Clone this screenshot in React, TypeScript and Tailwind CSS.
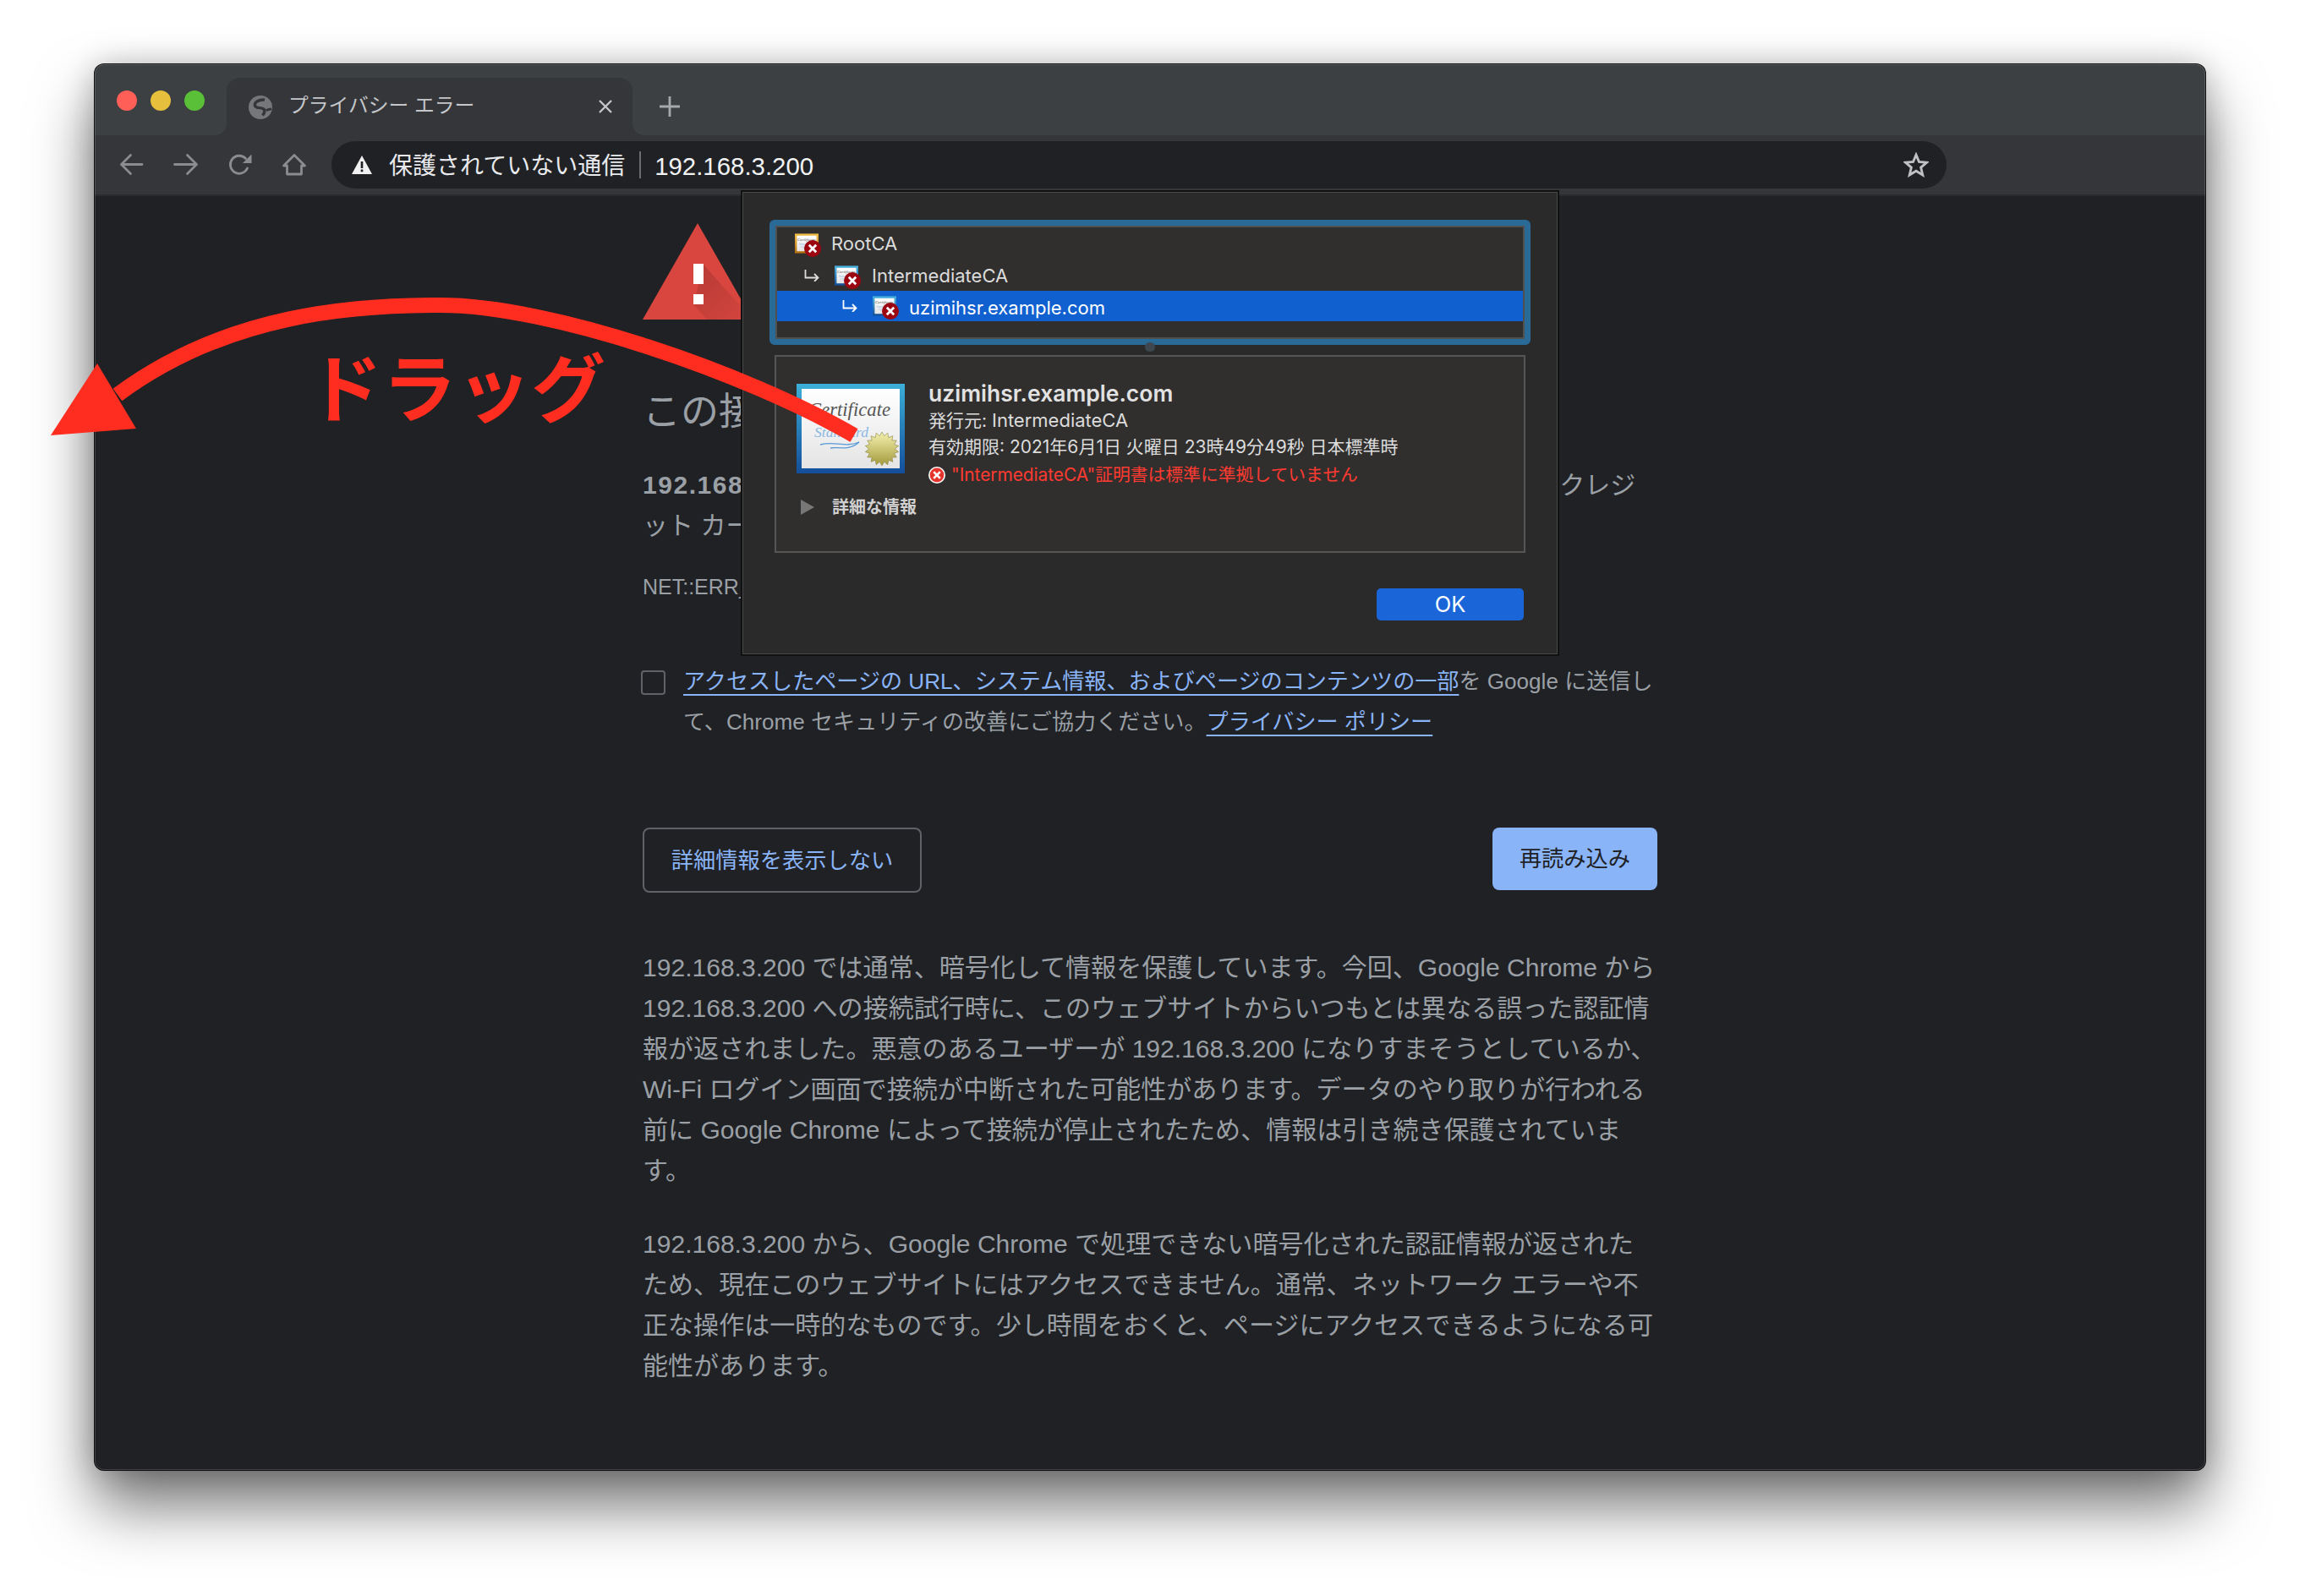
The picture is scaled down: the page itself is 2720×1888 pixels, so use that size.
import React from "react";

const pageFont = "[font-family:'Liberation_Sans','Noto_Sans_CJK_JP',sans-serif]";
const dialogFont = "[font-family:Inter,'Noto_Sans_CJK_JP',sans-serif]";

function sealPoints(cx: number, cy: number, outer: number, inner: number, spikes: number) {
    const pts: string[] = [];
    for (let i = 0; i < spikes * 2; i++) {
        const r = i % 2 === 0 ? outer : inner;
        const a = (Math.PI * i) / spikes;
        pts.push(`${(cx + r * Math.sin(a)).toFixed(1)},${(cy - r * Math.cos(a)).toFixed(1)}`);
    }
    return pts.join(" ");
}

function CertArt({ id, top, bottom, inset = 6 }: { id: string; top: string; bottom: string; inset?: number }) {
    return (
        <svg viewBox="0 0 128 106" className="w-full h-full block">
            <defs>
                <linearGradient id={`${id}-frame`} x1="0" y1="0" x2="0" y2="1">
                    <stop offset="0" stopColor={top} />
                    <stop offset="1" stopColor={bottom} />
                </linearGradient>
                <linearGradient id={`${id}-paper`} x1="0" y1="0" x2="0" y2="1">
                    <stop offset="0" stopColor="#ffffff" />
                    <stop offset="1" stopColor="#e4e4e4" />
                </linearGradient>
                <linearGradient id={`${id}-seal`} x1="0" y1="0" x2="0" y2="1">
                    <stop offset="0" stopColor="#f5f2b0" />
                    <stop offset="1" stopColor="#a39a3c" />
                </linearGradient>
            </defs>
            <rect width="128" height="106" fill={`url(#${id}-frame)`} />
            <rect x={inset} y={inset} width={128 - inset * 2} height={106 - inset * 2} fill={`url(#${id}-paper)`} />
            <text x="14" y="38" fontSize="23" fontStyle="italic" fontFamily="'Liberation Serif', serif" fill="#555555" textLength="97" lengthAdjust="spacingAndGlyphs">
                Certificate
            </text>
            <text x="21" y="63" fontSize="17" fontStyle="italic" fontFamily="'Liberation Serif', serif" fill="#8ab8e4" textLength="64" lengthAdjust="spacingAndGlyphs">
                Standard
            </text>
            <path d="M28 72 C46 67 56 76 74 69 C62 80 48 74 40 76" fill="none" stroke="#5a9ad8" strokeWidth="1.3" />
            <polygon points={sealPoints(101, 77, 20, 15.5, 18)} fill={`url(#${id}-seal)`} stroke="#8a8340" strokeWidth="0.6" />
        </svg>
    );
}

function SmallCert({ id, top, bottom }: { id: string; top: string; bottom: string }) {
    return (
        <div className="relative w-[28px] h-[24px] shrink-0">
            <CertArt id={id} top={top} bottom={bottom} inset={11} />
            <svg viewBox="0 0 20 20" className="absolute right-[-3px] bottom-[-4px] w-[20px] h-[20px]">
                <circle cx="10" cy="10" r="10" fill="#9c0610" />
                <path d="M5.8 5.8 14.2 14.2M14.2 5.8 5.8 14.2" stroke="#fff" strokeWidth="2.8" />
            </svg>
        </div>
    );
}

function TreeArrow() {
    return (
        <svg viewBox="0 0 18 14" className="w-[18px] h-[14px] shrink-0 mr-[18px]" fill="none" stroke="currentColor" strokeWidth="1.8">
            <path d="M1.5 0V9.5H16M12 5l4.5 4.5L12 14" />
        </svg>
    );
}

function NavIcon({ children }: { children: React.ReactNode }) {
    return (
        <svg viewBox="0 0 32 32" className="w-[32px] h-[32px] shrink-0" fill="none" stroke="#8a8c8f" strokeWidth="2.8" strokeLinecap="round" strokeLinejoin="round">
            {children}
        </svg>
    );
}

export default function App() {
    return (
        <div className={`relative w-[2720px] h-[1888px] bg-white overflow-hidden pt-[76px] pl-[112px] ${pageFont}`}>
            {/* browser window */}
            <div className="relative w-[2496px] h-[1663px] rounded-[11px] bg-[#202124] flex flex-col shadow-[0_0_0_1px_#111,0_42px_72px_rgba(0,0,0,0.55),0_0_36px_rgba(0,0,0,0.22)]">
                <div className="h-[84px] shrink-0 flex items-start bg-[#3c4043] rounded-t-[11px] pl-[26px]">
                    <div className="flex gap-[16px] mt-[31px] mr-[26px]">
                        <div className="w-[24px] h-[24px] rounded-full bg-[#ff5f57]" />
                        <div className="w-[24px] h-[24px] rounded-full bg-[#e6bf3c]" />
                        <div className="w-[24px] h-[24px] rounded-full bg-[#5ac038]" />
                    </div>
                    {/* tab */}
                    <div className="relative mt-[16px] w-[480px] h-[68px] bg-[#35363a] rounded-t-[16px] flex items-center pl-[26px] pr-[24px]">
                        <div className="absolute left-[-14px] bottom-0 w-[14px] h-[14px] bg-[#35363a]">
                            <div className="w-full h-full bg-[#3c4043] rounded-br-[14px]" />
                        </div>
                        <div className="absolute right-[-14px] bottom-0 w-[14px] h-[14px] bg-[#35363a]">
                            <div className="w-full h-full bg-[#3c4043] rounded-bl-[14px]" />
                        </div>
                        <svg viewBox="0 0 28 28" className="w-[28px] h-[28px] shrink-0 mt-[2px]" fill="none">
                            <circle cx="14" cy="14" r="14" fill="#75777a" />
                            <path d="M19 5C12 4.5 6.5 8 7.5 12C8.5 15.5 14 14 17 15.5C20 17 19 20.5 16.5 23.5" stroke="#35363a" strokeWidth="3.4" />
                            <path d="M27 15.5C24.5 17 22.5 16 21 18" stroke="#35363a" strokeWidth="3" />
                        </svg>
                        <span className="ml-[19px] -mt-[2px] text-[23.8px] text-[#c4c6c9] whitespace-nowrap">プライバシー エラー</span>
                        <svg viewBox="0 0 16 16" className="ml-auto w-[16px] h-[16px] shrink-0" stroke="#c4c6c9" strokeWidth="2.4">
                            <path d="M1 1 15 15M15 1 1 15" />
                        </svg>
                    </div>
                    <svg viewBox="0 0 24 24" className="ml-[32px] mt-[38px] w-[24px] h-[24px] shrink-0" stroke="#a6a8ab" strokeWidth="2.8">
                        <path d="M12 0V24M0 12H24" />
                    </svg>
                </div>

                {/* toolbar */}
                <div className="relative h-[72px] shrink-0 flex items-center bg-[#35363a] border-b-2 border-[#2a2b2d] pl-[27px] box-border">
                    <div className="flex gap-[32px]">
                        <NavIcon><path d="M29 15.5H5.5M15.5 4.5 4.5 15.5 15.5 26.5" /></NavIcon>
                        <NavIcon><path d="M3.5 15.5H28M18.5 4.5 29.5 15.5 18.5 26.5" /></NavIcon>
                        <NavIcon>
                            <path d="M23.5 8.5A10.5 10.5 0 1 0 25.5 20" />
                            <path d="M30.5 3.5V14H20Z" fill="#8a8c8f" stroke="none" />
                        </NavIcon>
                        <NavIcon><path d="M17 4.5 4.5 17H8.5V27H25.5V17H29.5Z" /></NavIcon>
                    </div>
                    <div className="ml-[29px] w-[1910px] h-[56px] rounded-full bg-[#202124] flex items-center pl-[24px] pr-[21px]">
                        <svg viewBox="0 0 24 22" className="w-[24px] h-[22px] shrink-0">
                            <path d="M12 0 24 22H0Z" fill="#f1f1f1" />
                            <path d="M10.7 7h2.6v8h-2.6zM10.7 16.5h2.6v2.7h-2.6z" fill="#202124" />
                        </svg>
                        <span className="ml-[20px] mt-[4px] text-[28px] text-[#e8eaed] whitespace-nowrap">保護されていない通信</span>
                        <div className="ml-[17px] w-[2px] h-[32px] bg-[#6a6c70]" />
                        <span className="ml-[16px] mt-[4px] text-[29.4px] text-[#f1f3f4]">192.168.3.200</span>
                        <svg viewBox="0 0 24 24" className="ml-auto w-[30px] h-[30px] shrink-0" fill="none" stroke="#c0c1c3" strokeWidth="2.3">
                            <path d="M12 2.5 14.8 9.2 22 9.8 16.5 14.5 18.2 21.6 12 17.8 5.8 21.6 7.5 14.5 2 9.8 9.2 9.2Z" />
                        </svg>
                    </div>
                </div>

                {/* interstitial page */}
                <div className="flex-1 pl-[648px] pt-[32px]">
                    <div className="w-[1200px] text-[30.05px] leading-[48px] text-[#9aa0a6]">
                        <svg viewBox="0 0 130 114" className="w-[130px] h-[114px] block">
                            <defs>
                                <linearGradient id="warn-shade" x1="0" y1="0" x2="1" y2="1">
                                    <stop offset="0" stopColor="#000" stopOpacity="0.16" />
                                    <stop offset="1" stopColor="#000" stopOpacity="0.02" />
                                </linearGradient>
                            </defs>
                            <path d="M65 0 130 114H0Z" fill="#d9463f" />
                            <path d="M72 49 130 114H76L60 96Z" fill="url(#warn-shade)" />
                            <rect x="60" y="48" width="12" height="24" fill="#fff" />
                            <rect x="60" y="84" width="12" height="12" fill="#fff" />
                        </svg>
                        <h1 className="mt-[80px] text-[45px] leading-[60px] font-normal whitespace-nowrap">
                            この接続ではプライバシーが保護されません
                        </h1>
                        <p className="mt-[32px]">
                            <b className="font-bold tracking-[1.5px]">192.168.3.200</b> では、悪意のあるユーザーによって、パスワード、メッセージ、クレジット カードなどの情報が不正に取得される可能性があります。
                        </p>
                        <p className="mt-[24px] text-[25px]">NET::ERR_CERT_AUTHORITY_INVALID</p>

                        <div className="mt-[65px] flex text-[26.1px]">
                            <div className="w-[29px] h-[29px] mt-[10px] ml-[-2px] mr-[21px] shrink-0 rounded-[4px] border-2 border-[#5f6368]" />
                            <p className="w-[1155px] -mt-[1px]">
                                <span className="text-[#8ab4f8] underline underline-offset-[6px] decoration-2">アクセスしたページの URL、システム情報、およびページのコンテンツの一部</span>
                                を Google に送信して、Chrome セキュリティの改善にご協力ください。
                                <span className="text-[#8ab4f8] underline underline-offset-[6px] decoration-2">プライバシー ポリシー</span>
                            </p>
                        </div>

                        <div className="mt-[101px] flex justify-between items-start text-[26.25px]">
                            <div className="w-[330px] h-[77px] rounded-[8px] border-2 border-[#5f6368] text-[#8ab4f8] flex items-center justify-center">
                                詳細情報を表示しない
                            </div>
                            <div className="w-[195px] h-[74px] rounded-[8px] bg-[#8ab4f8] text-[#202124] flex items-center justify-center">
                                再読み込み
                            </div>
                        </div>

                        <p className="mt-[65px]">
                            192.168.3.200 では通常、暗号化して情報を保護しています。今回、Google Chrome から 192.168.3.200 への接続試行時に、このウェブサイトからいつもとは異なる誤った認証情報が返されました。悪意のあるユーザーが 192.168.3.200 になりすまそうとしているか、Wi-Fi ログイン画面で接続が中断された可能性があります。データのやり取りが行われる前に Google Chrome によって接続が停止されたため、情報は引き続き保護されています。
                        </p>
                        <p className="mt-[39px]">
                            192.168.3.200 から、Google Chrome で処理できない暗号化された認証情報が返されたため、現在このウェブサイトにはアクセスできません。通常、ネットワーク エラーや不正な操作は一時的なものです。少し時間をおくと、ページにアクセスできるようになる可能性があります。
                        </p>
                    </div>
                </div>

                {/* certificate sheet */}
                <div className={`absolute left-[764px] top-[149px] w-[968px] h-[551px] bg-[#2a2a2a] border-2 border-[#111] shadow-[inset_0_0_0_1px_#484848] text-[#dcdcdc] ${dialogFont}`}>
                    <div className="ml-[32px] mt-[33px] w-[900px] h-[148px] rounded-[6px] border-[7px] border-[#2a6a97] box-border">
                        <div className="h-full border-2 border-[#505050] bg-[#302f2e] text-[22px]">
                            <div className="h-[38px] flex items-center pl-[21px]">
                                <SmallCert id="root" top="#f3c04a" bottom="#b56d10" />
                                <span className="ml-[15px]">RootCA</span>
                            </div>
                            <div className="h-[37px] flex items-center pl-[32px]">
                                <TreeArrow />
                                <SmallCert id="inter" top="#4ab4dc" bottom="#134e9a" />
                                <span className="ml-[16px] mt-[2px]">IntermediateCA</span>
                            </div>
                            <div className="h-[36px] flex items-center pl-[77px] bg-[#1160d0] text-white">
                                <TreeArrow />
                                <SmallCert id="leaf" top="#4ab4dc" bottom="#134e9a" />
                                <span className="ml-[15px] mt-[5px]">uzimihsr.example.com</span>
                            </div>
                        </div>
                    </div>
                    <div className="h-[12px] flex justify-center">
                        <div className="w-[12px] h-[11px] -mt-[3px] rounded-full bg-[#3e474d]" />
                    </div>
                    <div className="ml-[38px] w-[888px] h-[234px] border-2 border-[#555] bg-[#302f2e] box-border pl-[24px] pt-[32px]">
                        <div className="flex items-start">
                            <div className="w-[128px] h-[106px] shrink-0">
                                <CertArt id="main" top="#3cb0d8" bottom="#134e9a" />
                            </div>
                            <div className="ml-[28px] -mt-[6px] text-[21px] leading-[32px] whitespace-nowrap">
                                <div className="text-[26.5px] leading-[34px] font-semibold text-[#e2e2e2]">uzimihsr.example.com</div>
                                <div className="leading-[31px]">発行元: <span className="text-[22px]">IntermediateCA</span></div>
                                <div>有効期限: 2021年6月1日 火曜日 23時49分49秒 日本標準時</div>
                                <div className="flex items-center text-[#ff3a30] text-[20.8px] mt-[1px]">
                                    <svg viewBox="0 0 20 20" className="w-[20px] h-[20px] mr-[7px] shrink-0">
                                        <circle cx="10" cy="10" r="10" fill="#fff" />
                                        <circle cx="10" cy="10" r="8.4" fill="#e5342c" />
                                        <path d="M6.2 6.2 13.8 13.8M13.8 6.2 6.2 13.8" stroke="#fff" strokeWidth="2.6" />
                                    </svg>
                                    "IntermediateCA"証明書は標準に準拠していません
                                </div>
                            </div>
                        </div>
                        <div className="mt-[11px] h-[22px] flex items-center ml-[5px] text-[20px] font-bold text-[#d0d0d0]">
                            <div className="w-0 h-0 border-y-[9px] border-y-transparent border-l-[16px] border-l-[#777]" />
                            <span className="ml-[21px]">詳細な情報</span>
                        </div>
                    </div>
                    <div className="mt-[42px] flex justify-end pr-[40px]">
                        <div className="w-[174px] h-[38px] rounded-[5px] bg-[#1a66d8] text-white text-[25.5px] flex items-center justify-center">OK</div>
                    </div>
                </div>

                <div className="absolute inset-0 rounded-[11px] border border-white/15 pointer-events-none" />
            </div>

            {/* annotation over the screenshot */}
            <svg viewBox="0 0 2720 1888" className="absolute inset-0 w-[2720px] h-[1888px] pointer-events-none">
                <path d="M1010 515C880 440 650 361 521 361C420 361 270 370 139 467" fill="none" stroke="#ff2d1f" strokeWidth="18" />
                <path d="M60 515 115 430 161 507Z" fill="#ff2d1f" />
            </svg>
            <div className="absolute left-[364px] top-[412px] text-[88px] leading-[100px] font-bold text-[#ff2d1f] whitespace-nowrap">ドラッグ</div>
        </div>
    );
}
